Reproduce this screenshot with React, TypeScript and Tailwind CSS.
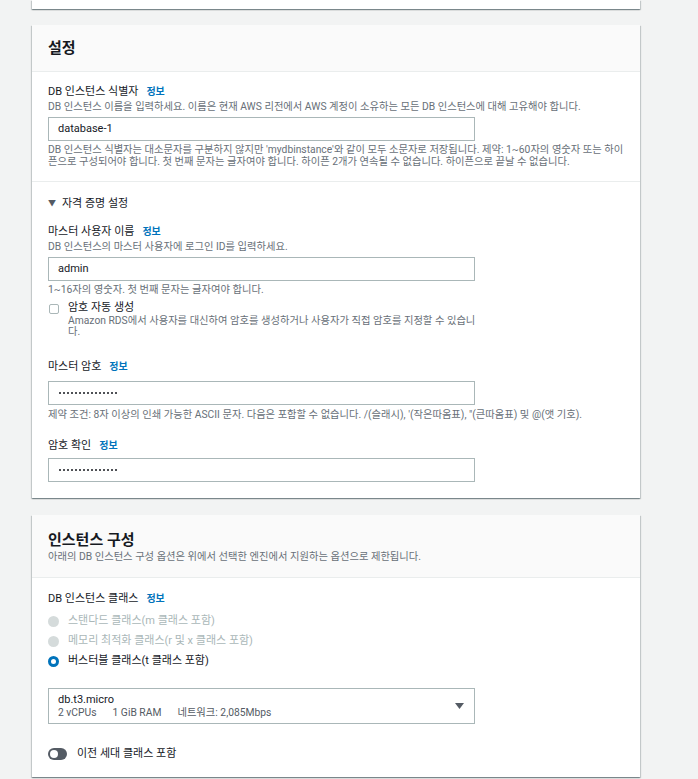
import React from "react";

const card =
  "bg-white shadow-[0_1px_1px_0_rgba(0,28,36,0.3),1px_1px_1px_0_rgba(0,28,36,0.15),-1px_1px_1px_0_rgba(0,28,36,0.15)]";

function Info() {
  return <span className="ml-2 text-[10px] font-bold text-[#0073bb]">정보</span>;
}

function Label({ children }: { children: React.ReactNode }) {
  return (
    <div className="flex items-center text-[11px] leading-4 text-[#16191f]">
      {children}
      <Info />
    </div>
  );
}

function Input({ value, dots }: { value: string; dots?: number }) {
  return (
    <div className="flex h-6 w-[427px] items-center border border-[#aab7b8] bg-white pl-[9px] text-[11px] text-[#16191f]">
      {dots ? (
        <span className="flex gap-[2px] pl-px">
          {Array.from({ length: dots }).map((_, i) => (
            <span key={i} className="h-[2px] w-[2px] rounded-[1px] bg-[#16191f]" />
          ))}
        </span>
      ) : (
        value
      )}
    </div>
  );
}

function Radio({ label, checked, disabled }: { label: string; checked?: boolean; disabled?: boolean }) {
  return (
    <div className="flex h-5 items-center">
      <span
        className={
          checked
            ? "h-[11px] w-[11px] rounded-full border-[3px] border-[#0073bb] bg-white"
            : "h-[11px] w-[11px] rounded-full bg-[#d5dbdb]"
        }
      />
      <span className={`ml-[9px] text-[11px] ${disabled ? "text-[#aab7b8]" : "text-[#16191f]"}`}>{label}</span>
    </div>
  );
}

export default function App() {
  return (
    <div className="min-h-screen bg-[#f2f3f3] font-[Roboto,'Noto_Sans_CJK_KR',sans-serif]">
      <div className="w-[608px] ml-8">
        <div className={`${card} h-[9px]`} />

        {/* 설정 */}
        <div className={`${card} mt-4`}>
          <div className="border-b border-[#eaeded] bg-[#fafafa] px-4 pt-[13px] pb-[13px]">
            <h2 className="text-[15px] leading-5 font-semibold text-[#16191f]">설정</h2>
          </div>
          <div className="px-4 pt-3 pb-[13px]">
            <Label>DB 인스턴스 식별자</Label>
            <p className="text-[10.3px] leading-[14px] text-[#687078]">
              DB 인스턴스 이름을 입력하세요. 이름은 현재 AWS 리전에서 AWS 계정이 소유하는 모든 DB 인스턴스에 대해 고유해야 합니다.
            </p>
            <div className="mt-[3px]">
              <Input value="database-1" />
            </div>
            <p className="mt-[3px] w-[576px] text-[10.3px] leading-3 text-[#687078]">
              DB 인스턴스 식별자는 대소문자를 구분하지 않지만 'mydbinstance'와 같이 모두 소문자로 저장됩니다. 제약: 1~60자의 영숫자 또는 하이픈으로 구성되어야 합니다. 첫 번째 문자는 글자여야 합니다. 하이픈 2개가 연속될 수 없습니다. 하이픈으로 끝날 수 없습니다.
            </p>
          </div>
          <div className="border-t border-[#eaeded] px-4 pt-[14px] pb-4">
            <div className="flex items-center text-[11px] leading-4 text-[#16191f]">
              <span className="mr-[6px] text-[8px] text-[#545b64]">▼</span>
              자격 증명 설정
            </div>
            <div className="mt-3">
              <Label>마스터 사용자 이름</Label>
              <p className="text-[10.3px] leading-[14px] text-[#687078]">DB 인스턴스의 마스터 사용자에 로그인 ID를 입력하세요.</p>
              <div className="mt-[3px]">
                <Input value="admin" />
              </div>
              <p className="mt-[3px] text-[10.3px] leading-3 text-[#687078]">1~16자의 영숫자. 첫 번째 문자는 글자여야 합니다.</p>
            </div>
            <div className="mt-[5px] flex">
              <span className="mt-[3px] ml-px h-[10px] w-[10px] shrink-0 rounded-[2px] border border-[#aab7b8] bg-white" />
              <div className="ml-[9px] w-[408px]">
                <div className="text-[11px] leading-[14px] text-[#16191f]">암호 자동 생성</div>
                <p className="text-[10.3px] leading-[11px] text-[#687078]">
                  Amazon RDS에서 사용자를 대신하여 암호를 생성하거나 사용자가 직접 암호를 지정할 수 있습니다.
                </p>
              </div>
            </div>
            <div className="mt-[22px]">
              <Label>마스터 암호</Label>
              <div className="mt-[6px]">
                <Input value="" dots={15} />
              </div>
              <p className="mt-[4px] text-[10.3px] leading-3 text-[#687078]">
                제약 조건: 8자 이상의 인쇄 가능한 ASCII 문자. 다음은 포함할 수 없습니다. /(슬래시), '(작은따옴표), "(큰따옴표) 및 @(앳 기호).
              </p>
            </div>
            <div className="mt-[17px]">
              <Label>암호 확인</Label>
              <div className="mt-[4px]">
                <Input value="" dots={15} />
              </div>
            </div>
          </div>
        </div>

        {/* 인스턴스 구성 */}
        <div className={`${card} mt-[17px]`}>
          <div className="border-b border-[#eaeded] bg-[#fafafa] px-4 pt-[15px] pb-[13px]">
            <h2 className="text-[15px] leading-5 font-semibold text-[#16191f]">인스턴스 구성</h2>
            <p className="text-[10.3px] leading-[14px] text-[#687078]">
              아래의 DB 인스턴스 구성 옵션은 위에서 선택한 엔진에서 지원하는 옵션으로 제한됩니다.
            </p>
          </div>
          <div className="px-4 pt-[13px] pb-[13px]">
            <Label>DB 인스턴스 클래스</Label>
            <div className="mt-[4px]">
              <Radio label="스탠다드 클래스(m 클래스 포함)" disabled />
              <Radio label="메모리 최적화 클래스(r 및 x 클래스 포함)" disabled />
              <Radio label="버스터블 클래스(t 클래스 포함)" checked />
            </div>
            <div className="mt-[17px] flex h-9 w-[427px] items-center justify-between border border-[#aab7b8] pl-[9px] pr-[10px]">
              <div>
                <div className="text-[11px] leading-[13px] text-[#16191f]">db.t3.micro</div>
                <div className="flex gap-4 text-[10.3px] leading-[13px] text-[#545b64]">
                  <span>2 vCPUs</span>
                  <span>1 GiB RAM</span>
                  <span>네트워크: 2,085Mbps</span>
                </div>
              </div>
              <svg width="9" height="7" viewBox="0 0 9 7">
                <path d="M0 0h9L4.5 6z" fill="#545b64" />
              </svg>
            </div>
            <div className="mt-[20px] flex h-5 items-center">
              <span className="flex h-[12px] w-[19px] items-center rounded-full bg-[#545b64] px-[2px]">
                <span className="h-[8px] w-[8px] rounded-full bg-white" />
              </span>
              <span className="ml-[10px] text-[11px] text-[#16191f]">이전 세대 클래스 포함</span>
            </div>
          </div>
        </div>
      </div>
    </div>
  );
}
